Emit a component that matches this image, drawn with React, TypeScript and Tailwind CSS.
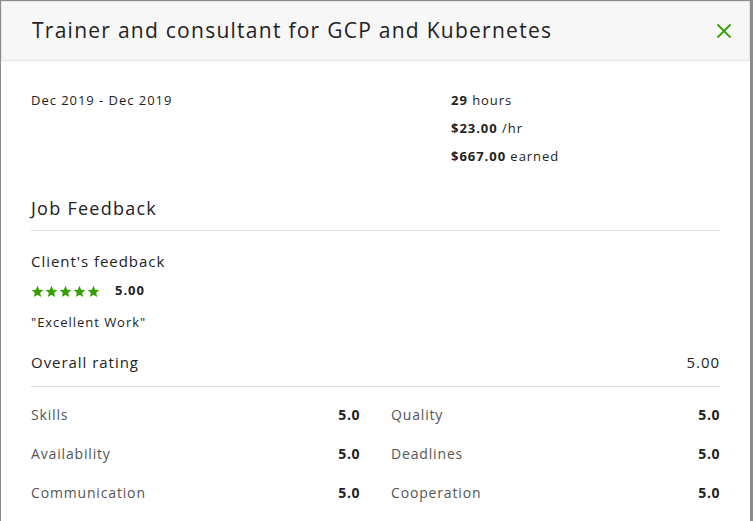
import React from "react";

const Star = () => (
  <svg width="13" height="13" viewBox="0 0 24 24" className="block">
    <path
      fill="#37a000"
      d="M12 1.5l3.1 7.1 7.7.7-5.8 5.1 1.7 7.6L12 18l-6.7 4 1.7-7.6L1.2 9.3l7.7-.7z"
    />
  </svg>
);

const Row = ({ a, b }: { a: [string, string]; b: [string, string] }) => (
  <div className="grid grid-cols-2 gap-x-[31px] h-[39px] items-center">
    <div className="flex justify-between items-center">
      <span className="text-[#555] text-[14px] tracking-[0.06em]">{a[0]}</span>
      <span className="font-bold text-[#222] text-[14px] tracking-[0.04em]">{a[1]}</span>
    </div>
    <div className="flex justify-between items-center">
      <span className="text-[#555] text-[14px] tracking-[0.06em]">{b[0]}</span>
      <span className="font-bold text-[#222] text-[14px] tracking-[0.04em]">{b[1]}</span>
    </div>
  </div>
);

export default function App() {
  return (
    <div
      className="w-[753px] h-[521px] bg-[#8c8c8c] pl-[1px] pt-[1px] pr-[3px] overflow-hidden"
      style={{ fontFamily: '"Open Sans", "Liberation Sans", sans-serif' }}
    >
      <div className="bg-white h-[600px] text-[#222]">
        <div className="h-[60px] bg-[#f7f7f7] border border-[#e4e4e4] flex items-center justify-between pl-[30px] pr-[17px]">
          <h1 className="text-[21px] font-normal text-[#222] tracking-[0.06em]">
            Trainer and consultant for GCP and Kubernetes
          </h1>
          <svg width="16" height="16" viewBox="0 0 16 16" className="block">
            <path d="M1.5 1.5L14.5 14.5M14.5 1.5L1.5 14.5" stroke="#37a000" strokeWidth="1.8" />
          </svg>
        </div>
        <div className="px-[30px] tracking-[0.06em]">
          <div className="flex pt-[29px]">
            <div className="w-[420px] text-[13px] leading-[20px]">Dec 2019 - Dec 2019</div>
            <div className="flex flex-col gap-[8px] text-[13px] leading-[20px]">
              <div>
                <span className="font-bold">29</span> hours
              </div>
              <div>
                <span className="font-bold">$23.00</span> /hr
              </div>
              <div>
                <span className="font-bold">$667.00</span> earned
              </div>
            </div>
          </div>
          <div className="mt-[28px] pb-[8px] border-b border-[#e0e0e0] text-[18px] leading-[28px] tracking-[0.07em]">
            Job Feedback
          </div>
          <div className="mt-[18px] text-[15px] leading-[24px]">Client's feedback</div>
          <div className="mt-[8px] flex items-center h-[20px]">
            <div className="flex gap-[1px]">
              <Star />
              <Star />
              <Star />
              <Star />
              <Star />
            </div>
            <span className="ml-[15px] font-bold text-[13px]">5.00</span>
          </div>
          <div className="mt-[11px] text-[13px] leading-[20px]">"Excellent Work"</div>
          <div className="mt-[18px] flex justify-between items-center pb-[12px] border-b border-[#e0e0e0] text-[15px] leading-[24px]">
            <span>Overall rating</span>
            <span>5.00</span>
          </div>
          <div className="mt-[8px]">
            <Row a={["Skills", "5.0"]} b={["Quality", "5.0"]} />
            <Row a={["Availability", "5.0"]} b={["Deadlines", "5.0"]} />
            <Row a={["Communication", "5.0"]} b={["Cooperation", "5.0"]} />
          </div>
        </div>
      </div>
    </div>
  );
}
